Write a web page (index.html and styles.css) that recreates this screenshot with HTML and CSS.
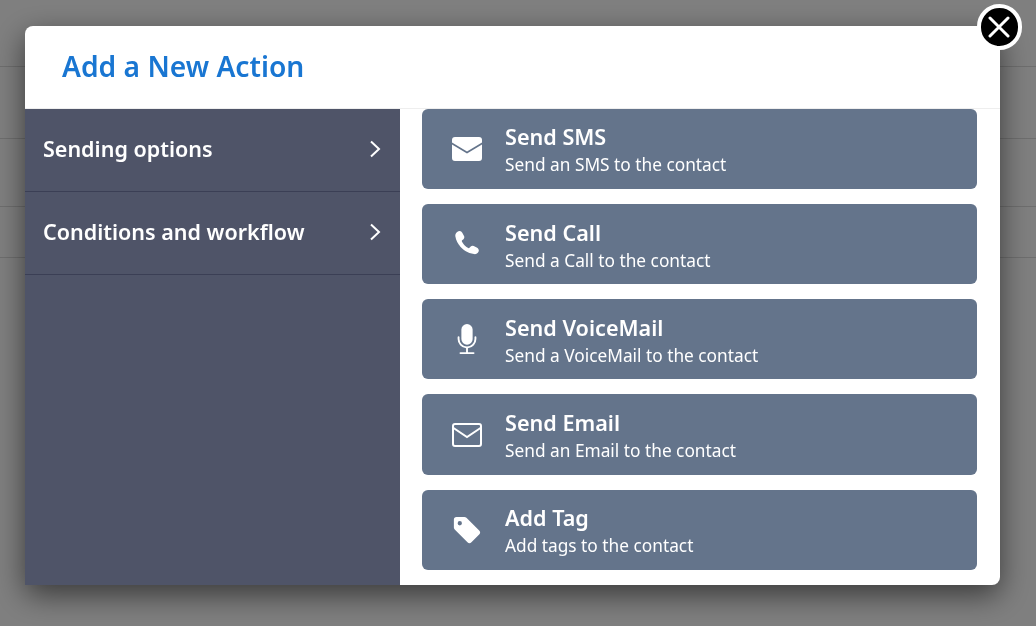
FILE: index.html
```html
<!DOCTYPE html>
<html lang="en">
<head>
    <meta charset="UTF-8">
    <meta name="viewport" content="width=device-width, initial-scale=1.0">
    <title>Add a New Action</title>
    <link rel="stylesheet" href="styles.css">
</head>
<body>

    <!-- page behind the dialog -->
    <div class="page">
        <div class="page-row row-a"></div>
        <div class="page-row row-b"></div>
        <div class="page-row row-c"></div>
        <div class="page-row row-d"></div>
    </div>

    <div class="overlay">
        <div class="modal">
            <button class="close" aria-label="Close">
                <svg viewBox="0 0 30 30" width="30" height="30"><path d="M6 6l18 18M24 6L6 24" fill="none" stroke="#fff" stroke-width="3" stroke-linecap="round"/></svg>
            </button>

            <div class="modal-header">
                <h1>Add a New Action</h1>
            </div>

            <div class="modal-body">
                <div class="sidebar">
                    <div class="side-item">
                        <span>Sending options</span>
                        <svg class="chevron" viewBox="0 0 12 18"><path d="M2 1.5L10 9l-8 7.5"/></svg>
                    </div>
                    <div class="side-item">
                        <span>Conditions and workflow</span>
                        <svg class="chevron" viewBox="0 0 12 18"><path d="M2 1.5L10 9l-8 7.5"/></svg>
                    </div>
                </div>

                <div class="actions">
                    <div class="action">
                        <svg class="icon" viewBox="0 0 30 24"><path d="M3 0h24a3 3 0 0 1 3 3v2.4L15 14.4 0 5.4V3a3 3 0 0 1 3-3z"/><path d="M0 7.4l15 9 15-9V21a3 3 0 0 1-3 3H3a3 3 0 0 1-3-3z"/></svg>
                        <div class="action-text">
                            <div class="action-title">Send SMS</div>
                            <div class="action-desc">Send an SMS to the contact</div>
                        </div>
                    </div>
                    <div class="action">
                        <svg class="icon" viewBox="0 0 17.1 17.1"><path d="M3.65 1.33a1.75 1.75 0 0 1 2.2.8l1 1.9c.3.6.2 1.3-.3 1.75l-.75.7a.6.6 0 0 0-.1.75c.9 1.6 2 2.75 3.55 3.6a.6.6 0 0 0 .72-.1l.7-.72a1.5 1.5 0 0 1 1.75-.3l1.9 1c.85.45 1.2 1.45.8 2.2-.5 1-1.5 1.6-2.6 1.4C7 13.4 2.7 9.1 1.9 4.2c-.2-1.2.6-2.4 1.75-2.87z"/></svg>
                        <div class="action-text">
                            <div class="action-title">Send Call</div>
                            <div class="action-desc">Send a Call to the contact</div>
                        </div>
                    </div>
                    <div class="action">
                        <svg class="icon" viewBox="0 0 16 16"><path d="M5 3a3 3 0 0 1 6 0v5a3 3 0 0 1-6 0V3z"/><path d="M3.5 6.5A.5.5 0 0 1 4 7v1a4 4 0 0 0 8 0V7a.5.5 0 0 1 1 0v1a5 5 0 0 1-4.5 4.975V15h3a.5.5 0 0 1 0 1h-7a.5.5 0 0 1 0-1h3v-2.025A5 5 0 0 1 3 8V7a.5.5 0 0 1 .5-.5z"/></svg>
                        <div class="action-text">
                            <div class="action-title">Send VoiceMail</div>
                            <div class="action-desc">Send a VoiceMail to the contact</div>
                        </div>
                    </div>
                    <div class="action">
                        <svg class="icon" viewBox="0 0 30 24"><rect x="1" y="1" width="28" height="22" rx="2" fill="none" stroke="#fff" stroke-width="2"/><path d="M1.5 5l13.5 9 13.5-9" fill="none" stroke="#fff" stroke-width="2"/></svg>
                        <div class="action-text">
                            <div class="action-title">Send Email</div>
                            <div class="action-desc">Send an Email to the contact</div>
                        </div>
                    </div>
                    <div class="action">
                        <svg class="icon" viewBox="0 0 16 16"><path fill-rule="evenodd" d="M2.4 1h4.2c.4 0 .8.2 1.1.45l6.8 6.8a1.5 1.5 0 0 1 0 2.1l-4.15 4.15a1.5 1.5 0 0 1-2.1 0l-6.8-6.8A1.6 1.6 0 0 1 1 6.6V2.4A1.4 1.4 0 0 1 2.4 1zm2.9 3.4a1.15 1.15 0 1 0-2.3 0 1.15 1.15 0 0 0 2.3 0z"/></svg>
                        <div class="action-text">
                            <div class="action-title">Add Tag</div>
                            <div class="action-desc">Add tags to the contact</div>
                        </div>
                    </div>
                </div>
            </div>
        </div>
    </div>

</body>
</html>
```

FILE: styles.css
```css
* {
    box-sizing: border-box;
}

html, body {
    height: 100%;
    margin: 0;
    overflow: hidden;
}

body {
    font-family: "Noto Sans", "Lato", sans-serif;
    background-color: #fff;
}

.page-row {
    border-bottom: 1px solid #ddd;
}

.row-a { height: 67px; }
.row-b { height: 72px; }
.row-c { height: 68px; }
.row-d { height: 51px; }

.overlay {
    position: fixed;
    top: 0;
    left: 0;
    right: 0;
    bottom: 0;
    padding: 26px 36px 41px 25px;
    background-color: rgba(0, 0, 0, 0.5);
}

.modal {
    position: relative;
    display: flex;
    flex-direction: column;
    height: 100%;
    background-color: #fff;
    border-radius: 8px;
    box-shadow: 0 10px 30px rgba(0, 0, 0, 0.55);
}

.close {
    position: absolute;
    top: -22px;
    right: -22px;
    display: flex;
    align-items: center;
    justify-content: center;
    width: 45.5px;
    height: 45.5px;
    padding: 0;
    background-color: #000;
    border: 4px solid #fff;
    border-radius: 50%;
}

.modal-header {
    display: flex;
    align-items: center;
    height: 82.67px;
    padding: 0 37px 2px;
    border-bottom: 1px solid #eee;
}

h1 {
    margin: 0;
    font-size: 28.2px;
    font-weight: 600;
    color: #1976d2;
}

.modal-body {
    display: flex;
    flex: 1;
    min-height: 0;
}

.sidebar {
    width: 375px;
    background-color: #4f5468;
}

.side-item {
    display: flex;
    align-items: center;
    justify-content: space-between;
    height: 83px;
    padding: 0 19px 2px 18px;
    border-bottom: 1px solid #3b3f55;
    font-size: 21.5px;
    font-weight: 600;
    color: #fff;
}

.chevron {
    width: 12px;
    height: 18px;
    fill: none;
    stroke: #fff;
    stroke-width: 2;
}

.actions {
    display: flex;
    flex: 1;
    flex-direction: column;
    gap: 15px;
    padding: 0 23px 0 22px;
}

.action {
    display: flex;
    align-items: center;
    gap: 23px;
    height: 80.25px;
    padding-left: 30px;
    background-color: #64748b;
    border-radius: 6px;
    color: #fff;
}

.icon {
    flex-shrink: 0;
    width: 30px;
    height: 30px;
    fill: #fff;
}

.action-text {
    padding-top: 5px;
}

.action-title {
    font-size: 21.6px;
    font-weight: 600;
    line-height: 28px;
}

.action-desc {
    font-size: 17.3px;
    line-height: 28px;
}
```
